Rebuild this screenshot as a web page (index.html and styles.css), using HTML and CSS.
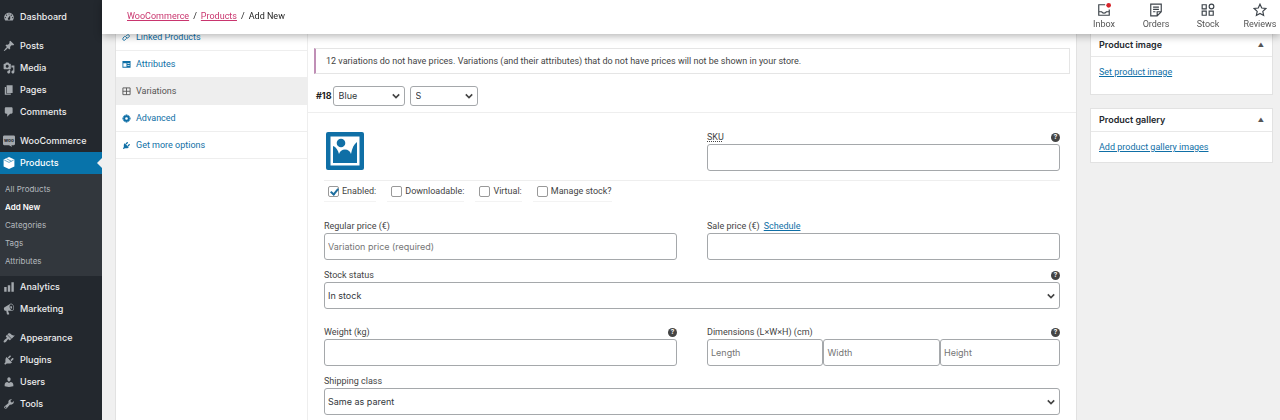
FILE: index.html
```html
<!DOCTYPE html>
<html lang="en">
<head>
  <meta charset="UTF-8">
  <meta name="viewport" content="width=device-width, initial-scale=1.0">
  <title>Add New Product</title>
  <link rel="stylesheet" href="styles.css">
</head>
<body>
  <!-- Admin Menu -->
  <nav class="admin-menu">
    <a class="menu-item" href="#">
      <svg class="menu-icon" viewBox="0 0 20 20"><path d="M3.76 16h12.48c1.1-1.37 1.76-3.11 1.76-5 0-4.42-3.58-8-8-8s-8 3.58-8 8c0 1.89.66 3.63 1.76 5zM10 4c.55 0 1 .45 1 1s-.45 1-1 1-1-.45-1-1 .45-1 1-1zM6 6c.55 0 1 .45 1 1s-.45 1-1 1-1-.45-1-1 .45-1 1-1zm8 0c.55 0 1 .45 1 1s-.45 1-1 1-1-.45-1-1 .45-1 1-1zm-5.37 5.55L12 7v6c0 1.1-.9 2-2 2s-2-.9-2-2c0-.57.24-1.08.63-1.45zM4 10c.55 0 1 .45 1 1s-.45 1-1 1-1-.45-1-1 .45-1 1-1zm12 0c.55 0 1 .45 1 1s-.45 1-1 1-1-.45-1-1 .45-1 1-1z"/></svg>
      Dashboard
    </a>
    <div class="menu-separator"></div>
    <a class="menu-item" href="#">
      <svg class="menu-icon" viewBox="0 0 20 20"><path d="M10.44 3.02l1.82-1.82 6.36 6.35-1.83 1.82c-1.05-.68-2.48-.57-3.41.36l-.75.75c-.92.93-1.04 2.35-.35 3.41l-1.83 1.82-2.41-2.41-2.8 2.79c-.42.42-3.38 2.71-3.8 2.29s1.86-3.39 2.28-3.81l2.79-2.79L4.1 9.36l1.83-1.82c1.05.69 2.48.57 3.4-.36l.75-.75c.93-.92 1.05-2.35.36-3.41z"/></svg>
      Posts
    </a>
    <a class="menu-item" href="#">
      <svg class="menu-icon" viewBox="0 0 20 20"><path d="M13 11V4c0-.55-.45-1-1-1h-1.67L9 1H5L3.67 3H2c-.55 0-1 .45-1 1v7c0 .55.45 1 1 1h10c.55 0 1-.45 1-1zM7 4.5c1.38 0 2.5 1.12 2.5 2.5S8.38 9.5 7 9.5 4.5 8.38 4.5 7 5.62 4.5 7 4.5zM14 6h5v10.5c0 1.38-1.12 2.5-2.5 2.5S14 17.88 14 16.5s1.12-2.5 2.5-2.5c.17 0 .34.02.5.05V9h-3V6zm-4 8.05V13h2v3.5c0 1.38-1.12 2.5-2.5 2.5S7 17.88 7 16.5 8.12 14 9.5 14c.17 0 .34.02.5.05z"/></svg>
      Media
    </a>
    <a class="menu-item" href="#">
      <svg class="menu-icon" viewBox="0 0 20 20"><path d="M6 15V2h10v13H6zm-1 1h8v2H3V5h2v11z"/></svg>
      Pages
    </a>
    <a class="menu-item" href="#">
      <svg class="menu-icon" viewBox="0 0 20 20"><path d="M5 2h9c1.1 0 2 .9 2 2v7c0 1.1-.9 2-2 2h-2l-5 5v-5H5c-1.1 0-2-.9-2-2V4c0-1.1.9-2 2-2z"/></svg>
      Comments
    </a>
    <div class="menu-separator"></div>
    <a class="menu-item" href="#">
      <svg class="menu-icon" viewBox="0 0 20 20"><path d="M2 1h16c1 0 2 1 2 2v12c0 1-1 2-2 2h-4l1 3-5-3H2c-1 0-2-1-2-2V3c0-1 1-2 2-2z"/><text class="woo-text" x="10" y="12" text-anchor="middle">woo</text></svg>
      WooCommerce
    </a>
    <a class="menu-item current" href="#">
      <svg class="menu-icon" viewBox="0 0 20 20"><path d="M10 0l9 4v12l-9 4-9-4V4z"/><path class="box-fold" d="M2 5l8 4 8-4M6 3l8 4"/></svg>
      Products
    </a>
    <div class="submenu">
      <a href="#">All Products</a>
      <a class="active" href="#">Add New</a>
      <a href="#">Categories</a>
      <a href="#">Tags</a>
      <a href="#">Attributes</a>
    </div>
    <a class="menu-item" href="#">
      <svg class="menu-icon" viewBox="0 0 20 20"><path d="M18 18V2h-4v16h4zm-6 0V7H8v11h4zm-6 0v-8H2v8h4z"/></svg>
      Analytics
    </a>
    <a class="menu-item" href="#">
      <svg class="menu-icon" viewBox="0 0 20 20"><path d="M18.150 5.940c.46 1.620.38 3.220-.02 4.480-.42 1.280-1.260 2.180-2.300 2.480-.16.060-.26.060-.4.060-.06.020-.12.020-.18.020-.06.020-.14.020-.22.020h-6.800l2.220 5.500c.02.140-.06.260-.14.340-.08.100-.24.160-.34.160H6.950c-.1 0-.26-.06-.34-.16-.08-.08-.16-.2-.14-.34l-1-5.500H4.250l-.02-.02c-.5.060-1.080-.18-1.540-.62s-.88-1.080-1.060-1.880c-.24-.8-.2-1.560-.02-2.200.18-.62.58-1.080 1.060-1.300l.02-.02 9-5.400c.1-.06.18-.1.24-.16.06-.04.14-.08.24-.12.16-.08.28-.12.5-.18 1.040-.3 2.240.1 3.220.98s1.840 2.240 2.260 3.860zm-2.580 5.980h-.02c.4-.1.74-.34 1.040-.7.58-.7.86-1.760.86-3.040 0-.64-.1-1.300-.28-1.980-.34-1.360-1.020-2.500-1.780-3.240s-1.680-1.100-2.460-.88c-.82.22-1.400.96-1.700 2-.32 1.040-.28 2.360.06 3.720.38 1.360 1 2.500 1.800 3.240.78.740 1.620 1.100 2.480.88zm-2.540-7.080c.22-.04.42-.02.62.040.38.160.76.480 1.020 1s.42 1.200.42 1.780c0 .3-.04.560-.12.800-.18.480-.44.840-.86.940-.34.100-.8-.06-1.140-.4s-.64-.86-.78-1.500c-.18-.62-.12-1.240.02-1.720s.48-.84.82-.94z"/></svg>
      Marketing
    </a>
    <div class="menu-separator"></div>
    <a class="menu-item" href="#">
      <svg class="menu-icon" viewBox="0 0 20 20"><path d="M14.480 11.060L7.410 3.990l1.500-1.500c.5-.56 2.300-.47 3.510.32 1.210.8 1.430 1.280 2.910 2.100 1.180.64 2.450 1.260 4.450.85zm-.71.71L6.700 4.700 4.930 6.470c-.39.39-.39 1.020 0 1.410l1.060 1.060c.39.39.39 1.030 0 1.420-.6.6-1.430 1.110-2.210 1.690-.35.26-.7.53-1.010.84C1.430 14.230.4 16.080 1.400 17.070c.99 1 2.840-.03 4.180-1.360.31-.31.58-.66.85-1.020.57-.78 1.080-1.610 1.690-2.210.39-.39 1.020-.39 1.410 0l1.060 1.060c.39.39 1.020.39 1.410 0z"/></svg>
      Appearance
    </a>
    <a class="menu-item" href="#">
      <svg class="menu-icon" viewBox="0 0 20 20"><path d="M13.110 4.360L9.870 7.600 8 5.730l3.240-3.240c.35-.34 1.050-.2 1.560.32.52.51.66 1.210.31 1.550zm-8 1.770l.91-1.120 9.010 9.010-1.190.84c-.71.71-2.630 1.160-3.820 1.160H6.140L4.900 17.260c-.59.59-1.540.59-2.120 0-.59-.58-.59-1.530 0-2.120l1.240-1.240v-3.880c0-1.130.4-3.190 1.090-3.890zm7.260 3.970l3.240-3.240c.34-.35 1.040-.21 1.550.31.52.51.66 1.210.31 1.550l-3.240 3.250z"/></svg>
      Plugins
    </a>
    <a class="menu-item" href="#">
      <svg class="menu-icon" viewBox="0 0 20 20"><path d="M10 9.250c-2.270 0-2.730-3.440-2.730-3.440C7 4.020 7.820 2 9.970 2c2.160 0 2.980 2.020 2.710 3.810 0 0-.41 3.440-2.680 3.440zm0 2.570L12.720 10c2.390 0 4.520 2.330 4.520 4.530v2.490s-3.650 1.130-7.240 1.130c-3.650 0-7.240-1.130-7.240-1.130v-2.490c0-2.250 1.940-4.480 4.470-4.480z"/></svg>
      Users
    </a>
    <a class="menu-item" href="#">
      <svg class="menu-icon" viewBox="0 0 20 20"><path d="M16.680 9.770c-1.340 1.340-3.300 1.670-4.950.99l-5.410 6.520c-.99.99-2.590.99-3.580 0s-.99-2.590 0-3.570l6.520-5.420c-.68-1.650-.35-3.610.99-4.950 1.280-1.280 3.120-1.620 4.720-1.060l-2.890 2.890 2.820 2.820 2.860-2.870c.53 1.580.18 3.390-1.080 4.650zM3.810 16.210c.4.39 1.040.39 1.430 0 .4-.4.4-1.040 0-1.430-.39-.4-1.030-.4-1.430 0-.39.39-.39 1.030 0 1.430z"/></svg>
      Tools
    </a>
  </nav>

  <div class="page">
    <!-- Top Bar -->
    <header class="topbar">
      <div class="breadcrumb">
        <a href="#">WooCommerce</a><span>/</span><a href="#">Products</a><span>/</span>Add New
      </div>
      <div class="activity">
        <button type="button">
          <svg viewBox="0 0 24 24"><path d="M14 3H3v18h18V11M3 15h5c1 3 7 3 8 0h5"/><circle class="unread" cx="20" cy="4" r="4"/></svg>
          Inbox
        </button>
        <button type="button">
          <svg viewBox="0 0 24 24"><path d="M3 2h18v13l-7 7H3zM21 15h-7v7M7 7h10M7 11h10M7 15h4"/></svg>
          Orders
        </button>
        <button type="button">
          <svg viewBox="0 0 24 24"><path d="M2 3h7v7H2zM2 14h7v7H2zM14 14h7v7h-7z"/><circle cx="18" cy="6" r="4"/></svg>
          Stock
        </button>
        <button type="button">
          <svg viewBox="0 0 24 24"><path d="M12 2l3 6.700 7 .8-5.200 4.800 1.400 7L12 17.800 5.800 21.300l1.400-7L2 9.500l7-.8z"/></svg>
          Reviews
        </button>
      </div>
    </header>

    <main class="content">
      <!-- Product Data -->
      <section class="product-data">
        <ul class="tabs">
          <li><a href="#">
            <svg class="tab-icon line" viewBox="0 0 20 20"><path d="M9 7l3-3a3 3 0 0 1 4 4l-3 3a3 3 0 0 1-4 0M11 11l-3-3a3 3 0 0 0-4 1l-2 3a3 3 0 0 0 4 4l3-3"/></svg>
            Linked Products</a></li>
          <li><a href="#">
            <svg class="tab-icon" viewBox="0 0 20 20"><path fill-rule="evenodd" d="M1 2h18v15H1zM3 7v8h7V7zM12 7v2h5V7zM12 11v2h5v-2z"/></svg>
            Attributes</a></li>
          <li class="active"><a href="#">
            <svg class="tab-icon line" viewBox="0 0 20 20"><path d="M2 2h16v15H2zM10 2v15M2 9.500h16"/></svg>
            Variations</a></li>
          <li><a href="#">
            <svg class="tab-icon gear" viewBox="0 0 20 20"><circle cx="10" cy="10" r="5"/><path d="M10 1v3M10 16v3M1 10h3M16 10h3M4 4l2 2M14 14l2 2M4 16l2-2M14 6l2-2"/></svg>
            Advanced</a></li>
          <li><a href="#">
            <svg class="tab-icon" viewBox="0 0 20 20"><path d="M13.110 4.360L9.870 7.600 8 5.730l3.240-3.240c.35-.34 1.050-.2 1.560.32.52.51.66 1.210.31 1.550zm-8 1.770l.91-1.120 9.010 9.010-1.190.84c-.71.71-2.630 1.160-3.820 1.160H6.140L4.900 17.260c-.59.59-1.540.59-2.120 0-.59-.58-.59-1.530 0-2.120l1.240-1.240v-3.880c0-1.130.4-3.190 1.090-3.890zm7.260 3.970l3.240-3.240c.34-.35 1.040-.21 1.550.31.52.51.66 1.210.31 1.550l-3.240 3.250z"/></svg>
            Get more options</a></li>
        </ul>

        <div class="panel">
          <p class="notice">12 variations do not have prices. Variations (and their attributes) that do not have prices will not be shown in your store.</p>

          <div class="variation-head">
            <strong>#18</strong>
            <span class="select-wrap color">
              <select aria-label="Color"><option>Blue</option></select>
              <svg class="chevron" viewBox="0 0 10 10"><path d="M1 3l4 4 4-4"/></svg>
            </span>
            <span class="select-wrap size">
              <select aria-label="Size"><option>S</option></select>
              <svg class="chevron" viewBox="0 0 10 10"><path d="M1 3l4 4 4-4"/></svg>
            </span>
          </div>

          <form class="variation">
            <div class="row">
              <a class="upload" href="#" aria-label="Upload an image">
                <svg viewBox="0 0 38 38"><rect width="38" height="38" rx="2"/><path class="paper" d="M4.500 4.500h29v29h-29z"/><circle cx="15" cy="11" r="4.300"/><path d="M7 14c3 1 5 4 6 8 1-3 3-4.500 6-4.500s5 1.500 6 4.500c1-6 3-10 6-12v21H7z"/></svg>
              </a>
              <div class="field">
                <div class="field-label"><label for="sku"><abbr title="Stock Keeping Unit">SKU</abbr></label><span class="help">?</span></div>
                <input type="text" id="sku">
              </div>
            </div>

            <div class="options">
              <label><input type="checkbox" checked> Enabled:</label>
              <label><input type="checkbox"> Downloadable:</label>
              <label><input type="checkbox"> Virtual:</label>
              <label><input type="checkbox"> Manage stock?</label>
            </div>

            <div class="row">
              <div class="field">
                <div class="field-label"><label for="regular">Regular price (€)</label></div>
                <input type="text" id="regular" placeholder="Variation price (required)">
              </div>
              <div class="field">
                <div class="field-label"><label for="sale">Sale price (€)</label><a href="#">Schedule</a></div>
                <input type="text" id="sale">
              </div>
            </div>

            <div class="field">
              <div class="field-label"><label for="stock">Stock status</label><span class="help">?</span></div>
              <span class="select-wrap">
                <select id="stock"><option>In stock</option></select>
                <svg class="chevron" viewBox="0 0 10 10"><path d="M1 3l4 4 4-4"/></svg>
              </span>
            </div>

            <div class="row shipping-row">
              <div class="field">
                <div class="field-label"><label for="weight">Weight (kg)</label><span class="help">?</span></div>
                <input type="text" id="weight">
              </div>
              <div class="field">
                <div class="field-label"><label for="length">Dimensions (L×W×H) (cm)</label><span class="help">?</span></div>
                <div class="dimensions">
                  <input type="text" id="length" placeholder="Length">
                  <input type="text" aria-label="Width" placeholder="Width">
                  <input type="text" aria-label="Height" placeholder="Height">
                </div>
              </div>
            </div>

            <div class="field">
              <div class="field-label"><label for="shipping">Shipping class</label></div>
              <span class="select-wrap">
                <select id="shipping"><option>Same as parent</option></select>
                <svg class="chevron" viewBox="0 0 10 10"><path d="M1 3l4 4 4-4"/></svg>
              </span>
            </div>
          </form>
        </div>
      </section>

      <!-- Side Boxes -->
      <aside class="side">
        <div class="postbox image-box">
          <h2>Product image <span class="arrow">▲</span></h2>
          <div class="inside"><a href="#">Set product image</a></div>
        </div>
        <div class="postbox">
          <h2>Product gallery <span class="arrow">▲</span></h2>
          <div class="inside"><a href="#">Add product gallery images</a></div>
        </div>
      </aside>
    </main>
  </div>
</body>
</html>
```
FILE: styles.css
```css
/* Global Styles */
* {
  box-sizing: border-box;
}

body {
  margin: 0;
  display: flex;
  min-height: 100vh;
  background-color: #f0f0f0;
  color: #444;
  font-family: Roboto, "Liberation Sans", sans-serif;
  font-size: 9px;
  line-height: 14px;
}

a {
  color: #0f6fa6;
}

input, select, button {
  font: inherit;
}

/* Admin Menu */
.admin-menu {
  width: 102px;
  flex: none;
  padding-top: 6px;
  background-color: #23282e;
  font-family: Inter, "Liberation Sans", sans-serif;
}

.menu-item {
  position: relative;
  display: flex;
  align-items: center;
  gap: 5px;
  height: 22px;
  padding-left: 3px;
  color: #eee;
  font-weight: 500;
  text-decoration: none;
}

.menu-icon {
  width: 12px;
  height: 12px;
  fill: #a3a8ad;
}

.woo-text {
  fill: #23282e;
  font-size: 8px;
  font-weight: 700;
}

.menu-separator {
  height: 7px;
}

.menu-item.current {
  background-color: #0873aa;
  color: #fff;
}

.current .menu-icon {
  fill: #fff;
}

.current .box-fold {
  fill: none;
  stroke: #0873aa;
}

.menu-item.current::after {
  content: "";
  position: absolute;
  right: 0;
  top: 6px;
  border: 5px solid transparent;
  border-right-color: #f0f0f0;
  border-left: 0;
}

.submenu {
  padding: 6px 5px;
  background-color: #32373d;
}

.submenu a {
  display: block;
  color: #b4b9be;
  font-size: 8px;
  line-height: 18px;
  text-decoration: none;
}

.submenu .active {
  color: #fff;
  font-weight: 600;
}

/* Top Bar */
.page {
  flex: 1;
  min-width: 0;
}

.topbar {
  position: fixed;
  top: 0;
  left: 102px;
  right: 0;
  z-index: 10;
  display: flex;
  justify-content: space-between;
  height: 34px;
  padding: 0 2px 0 25px;
  background-color: #fff;
  box-shadow: 0 2px 8px rgba(0, 0, 0, 0.3);
}

.breadcrumb {
  color: #222;
  line-height: 32px;
}

.breadcrumb a {
  color: #c9356e;
}

.breadcrumb span {
  margin: 0 4px;
}

.activity {
  display: flex;
  gap: 16px;
}

.activity button {
  display: flex;
  flex-direction: column;
  align-items: center;
  width: 36px;
  padding: 3px 0 0;
  border: 0;
  background: none;
  color: #555;
  cursor: pointer;
}

.activity svg {
  width: 14px;
  height: 14px;
  flex: none;
  fill: none;
  stroke: #3c434a;
  stroke-width: 2;
}

.activity .unread {
  fill: #d6232a;
  stroke: none;
}

/* Content */
.content {
  display: flex;
  gap: 13px;
  min-height: 100vh;
  padding: 24px 7px 0 13px;
}

.product-data {
  flex: 1;
  display: flex;
  min-width: 0;
  border: 1px solid #e2e2e2;
  border-top: 0;
  border-bottom: 0;
  background-color: #fff;
}

.tabs {
  width: 192px;
  flex: none;
  margin: 0;
  padding: 0;
  border-right: 1px solid #eee;
  list-style: none;
}

.tabs a {
  display: flex;
  align-items: center;
  gap: 5px;
  height: 27px;
  padding-left: 6px;
  border-bottom: 1px solid #eee;
  text-decoration: none;
}

.tabs .active a {
  background-color: #eee;
  color: #555;
}

.tab-icon {
  width: 9px;
  height: 9px;
  fill: currentColor;
}

.tab-icon.line {
  fill: none;
  stroke: currentColor;
  stroke-width: 2;
}

.tab-icon.gear {
  fill: none;
  stroke: currentColor;
  stroke-width: 4;
}

/* Variation Panel */
.panel {
  flex: 1;
  min-width: 0;
  padding-top: 24px;
}

.notice {
  margin: 0 6px;
  padding: 5px 10px;
  border: 1px solid #e5e5e5;
  border-left: 2px solid #c08fb6;
}

.variation-head {
  display: flex;
  align-items: center;
  gap: 1px;
  height: 39px;
  padding: 6px 8px 0;
  border-bottom: 1px solid #eee;
}

.variation-head strong {
  color: #222;
  font-family: Inter, "Liberation Sans", sans-serif;
}

.select-wrap {
  position: relative;
  display: block;
}

.select-wrap.color {
  width: 72px;
}

.select-wrap.size {
  width: 68px;
  margin-left: 4px;
}

.chevron {
  position: absolute;
  right: 5px;
  top: 50%;
  width: 8px;
  height: 8px;
  margin-top: -4px;
  fill: none;
  stroke: #444;
  stroke-width: 2;
  pointer-events: none;
}

select, input[type="text"] {
  display: block;
  width: 100%;
  height: 27px;
  padding: 0 3px;
  border: 1px solid #a5a8ab;
  border-radius: 3px;
  background-color: #fff;
  color: #32373c;
  font-family: Inter, "Liberation Sans", sans-serif;
  appearance: none;
}

.variation-head select {
  height: 20px;
  padding: 0 5px;
}

::placeholder {
  color: #757575;
}

.variation {
  display: flex;
  flex-direction: column;
  gap: 8px;
  padding: 17px 16px 5px;
}

.row {
  display: grid;
  grid-template-columns: 1fr 1fr;
  gap: 30px;
}

.upload {
  padding: 2px;
}

.upload svg {
  display: block;
  width: 38px;
  height: 38px;
  fill: #0f6fa6;
}

.upload .paper {
  fill: #fff;
}

.field-label {
  display: flex;
  align-items: center;
  gap: 4px;
}

.field-label abbr {
  text-decoration: underline dotted;
}

.help {
  width: 9px;
  height: 9px;
  margin-left: auto;
  border-radius: 50%;
  background-color: #444;
  color: #fff;
  font-size: 7px;
  font-weight: 700;
  line-height: 9px;
  text-align: center;
}

.options {
  display: flex;
  gap: 11px;
  height: 31px;
  border-top: 1px solid #eee;
}

.options label {
  display: flex;
  align-items: center;
  gap: 3px;
  height: 21px;
  padding-left: 4px;
  border-bottom: 1px solid #f3f3f3;
}

.options input {
  position: relative;
  width: 11px;
  height: 11px;
  margin: 0;
  border: 1px solid #999;
  border-radius: 2px;
  background-color: #fff;
  appearance: none;
}

.options input:checked::after {
  content: "";
  position: absolute;
  left: 3px;
  top: 0;
  width: 3px;
  height: 6px;
  border: solid #1e6f9f;
  border-width: 0 2px 2px 0;
  transform: rotate(40deg);
}

.shipping-row {
  margin-top: 8px;
}

.dimensions {
  display: grid;
  grid-template-columns: 33% 33% 34%;
}

/* Side Boxes */
.side {
  width: 183px;
  flex: none;
  padding-top: 9px;
}

.postbox {
  margin-bottom: 13px;
  border: 1px solid #e2e2e2;
  background-color: #fff;
}

.postbox h2 {
  display: flex;
  justify-content: space-between;
  align-items: center;
  height: 23px;
  margin: 0;
  padding: 0 8px;
  border-bottom: 1px solid #e8e8e8;
  color: #23282d;
  font-family: Inter, "Liberation Sans", sans-serif;
  font-size: 9px;
  font-weight: 600;
}

.arrow {
  color: #555;
  font-size: 6px;
}

.inside {
  padding: 8px;
}

.image-box .inside {
  padding-bottom: 15px;
}
```
